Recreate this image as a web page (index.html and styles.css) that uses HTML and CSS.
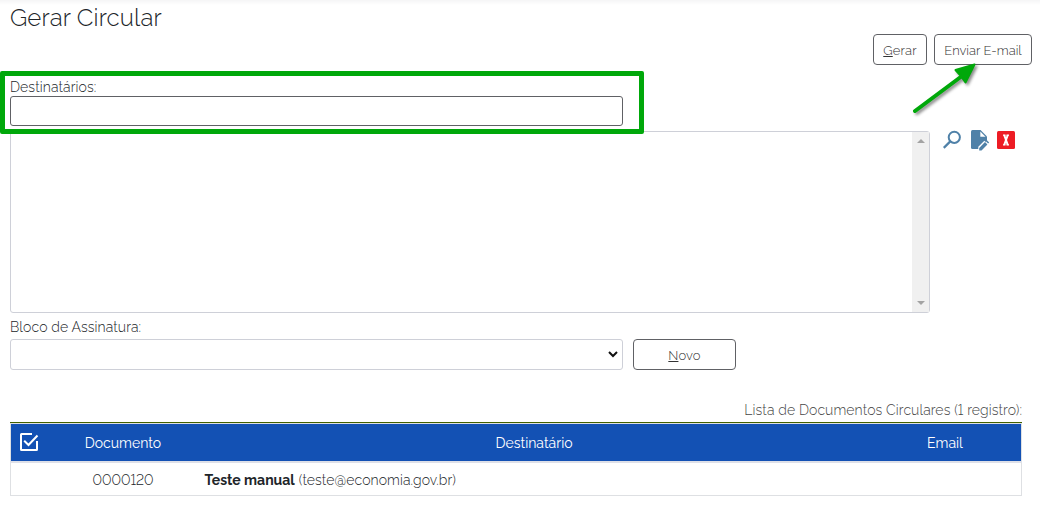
FILE: index.html
```html
<!DOCTYPE html>
<html lang="pt-BR">
<head>
<meta charset="utf-8">
<title>Gerar Circular</title>
<link rel="stylesheet" href="styles.css">
</head>
<body>
<main class="page">
  <h1 class="title"><span>Gerar Circular</span></h1>
  <div class="commands">
    <button class="btn btn-gerar"><span><u>G</u>erar</span></button>
    <button class="btn btn-enviar"><span>Enviar E-mail</span></button>
  </div>
  <section class="recipients">
    <label class="label label-dest" for="dest"><span>Destinatários:</span></label>
    <input class="field" id="dest" type="text">
    <div class="list-row">
      <div class="listbox">
        <div class="scrollbar"><i class="up"></i><i class="down"></i></div>
      </div>
      <div class="tools">
        <svg width="20" height="20" viewBox="0 0 20 20"><circle cx="11.3" cy="6.3" r="5.6" fill="none" stroke="#4f81a8" stroke-width="2"/><path d="M7.3 10.4L0.8 16.9" stroke="#4f81a8" stroke-width="2.2"/></svg>
        <svg width="20" height="20" viewBox="0 0 20 20"><path d="M2.5 -1H10.5L17 5.500V9.600L8.500 18H2.500Q1 18 1 16.500V0.500Q1 -1 2.500 -1Z" fill="#4f81a8"/><path d="M10.300 0.600V5.800H15.500Z" fill="#fff"/><path d="M8.300 20V15.800L14.300 9.800L18.900 14L13 20Z" fill="#fff"/><path d="M9.200 19.600V16.900L15 11.100L17.400 13.500L11.500 19.600Z" fill="#4f81a8"/><path d="M15.800 10.300L16.900 9.200L19.200 11.500L18.100 12.600Z" fill="#4f81a8"/></svg>
        <svg width="18" height="18" viewBox="0 0 18 18"><rect width="18" height="18" rx="1.5" fill="#ed1c24"/><path d="M7.200 4L10.800 14M10.800 4L7.200 14" stroke="#fff" stroke-width="2"/><path d="M6 4.200H8.500M9.500 4.200H12M6 13.800H8.500M9.500 13.800H12" stroke="#fff" stroke-width="1.200"/></svg>
      </div>
    </div>
  </section>
  <section class="block">
    <span class="label label-bloco"><span>Bloco de Assinatura:</span></span>
    <div class="block-row">
      <div class="select"><svg width="10" height="7" viewBox="0 0 10 7"><path d="M1 1L5 5L9 1" fill="none" stroke="#111" stroke-width="2"/></svg></div>
      <button class="btn btn-novo"><span><u>N</u>ovo</span></button>
    </div>
  </section>
  <section class="documents">
    <div class="caption"><span>Lista de Documentos Circulares (1 registro):</span></div>
    <div class="table">
      <div class="row head">
        <div class="check"><svg width="20" height="20" viewBox="0 0 20 20"><path d="M13 2H2.500Q2 2 2 2.500V17.500Q2 18 2.500 18H17.500Q18 18 18 17.500V9" fill="none" stroke="#fff" stroke-width="2"/><path d="M5.200 8.800L9.500 13L18.500 3.500" fill="none" stroke="#fff" stroke-width="2"/></svg></div>
        <div class="doc"><span>Documento</span></div>
        <div class="person centered"><span>Destinatário</span></div>
        <div class="mail"><span>Email</span></div>
      </div>
      <div class="row item">
        <div class="check"></div>
        <div class="doc"><span class="number">0000120</span></div>
        <div class="person"><b>Teste manual</b><span class="address">(teste@economia.gov.br)</span></div>
        <div class="mail"></div>
      </div>
    </div>
  </section>
  <div class="highlight"></div>
  <svg class="arrow" width="80" height="64" viewBox="0 0 80 64"><g fill="#00a80a" stroke="#00a80a"><path d="M10 54L57 19" stroke-width="4" stroke-linecap="round"/><path d="M69.500 7.500L50.500 13L55.500 18.500L60.500 25.500Z" stroke-width="2" stroke-linejoin="round"/></g></svg>
</main>
</body>
</html>
```
FILE: styles.css
```css
* { box-sizing: border-box; }
body {
  margin: 0;
  background: #fff;
  color: #212529;
  font: 300 14px/20px Raleway, Lato, sans-serif;
  font-variant-numeric: lining-nums;
}
.page {
  position: relative;
  height: 509px;
  overflow: hidden;
  padding: 0 8px 0 10px;
  background: linear-gradient(#f5f5f6, #fff) 0 0 / 100% 5px no-repeat;
}
.title {
  margin: 0;
  height: 34px;
  padding-top: 3px;
  font-size: 24px;
  line-height: 30px;
  font-weight: 300;
}
.title span { letter-spacing: 0.15px; }
.commands { display: flex; justify-content: flex-end; gap: 7px; }
.btn {
  height: 31px;
  padding: 0;
  border: 1px solid #606165;
  border-radius: 4px;
  background: #fff;
  color: #333;
  font: 300 13px/20px Raleway, Lato, sans-serif;
  white-space: nowrap;
}
.btn u { text-underline-offset: 1px; }
.btn-gerar { width: 54px; }
.btn-enviar { width: 98px; }
.btn-novo { width: 103px; }
.btn span { position: relative; top: 1px; letter-spacing: 0.15px; }
.btn-enviar span { letter-spacing: 0; }
.recipients { padding-top: 12px; }
.label { display: block; height: 19px; letter-spacing: 0.1px; }
.field {
  display: block;
  width: 613px;
  height: 30px;
  border: 1px solid #606165;
  border-radius: 3px;
  background: #fff;
}
.list-row { display: flex; margin-top: 5px; gap: 13px; }
.listbox {
  display: flex;
  justify-content: flex-end;
  width: 920px;
  height: 182px;
  border: 1px solid #ced0d8;
  border-radius: 3px;
}
.scrollbar {
  display: flex;
  flex-direction: column;
  justify-content: space-between;
  align-items: center;
  width: 17px;
  padding: 7px 0;
  background: #f0f0f0;
}
.scrollbar i { border: 4px solid transparent; }
.scrollbar .up { border-top: 0; border-bottom-color: #a3a3a3; }
.scrollbar .down { border-bottom: 0; border-top-color: #a3a3a3; }
.tools { display: flex; gap: 7px; }
.tools svg { overflow: visible; }
.block { padding-top: 4px; }
.block .label { height: 22px; }
.block-row { display: flex; gap: 10px; }
.select {
  display: flex;
  align-items: center;
  justify-content: flex-end;
  width: 613px;
  height: 31px;
  padding-right: 4px;
  border: 1px solid #ced0d8;
  border-radius: 3px;
}
.documents { width: 1012px; padding-top: 30px; }
.caption {
  height: 22px;
  text-align: right;
  color: #444;
  white-space: nowrap;
  letter-spacing: 0.1px;
}
.table { border: 1px solid #dee0e3; border-top: 0; }
.row { display: flex; align-items: center; }
.head {
  height: 41px;
  margin: 0 -1px;
  padding: 0 1px;
  border-top: 1px solid #426100;
  border-bottom: 2px solid #dee0e8;
  background: #1351b4;
  background-clip: padding-box;
  box-shadow: inset 0 1px #dee0e3, inset 1px 0 #dee0e3, inset -1px 0 #dee0e3;
  color: #fff;
  font-weight: 400;
}
.head > div:not(.check) { padding-top: 2px; }
.item { height: 32px; padding-top: 2px; }
.check { display: flex; width: 52px; padding-left: 8px; }
.doc { width: 120px; text-align: center; }
.person { width: 702px; padding-left: 21.5px; white-space: nowrap; }
.person.centered { padding-left: 0; text-align: center; }
.mail { width: 136px; padding-right: 16px; text-align: center; }
.person b { margin-right: 4px; font-weight: 700; }
.address { letter-spacing: 0.08px; }
.highlight {
  position: absolute;
  left: 0;
  top: 71px;
  width: 644px;
  height: 63px;
  border: 5px solid #00a80a;
  border-radius: 2px;
}
.arrow {
  position: absolute;
  left: 905px;
  top: 57px;
  filter: drop-shadow(2px 2px 1.5px rgba(0, 0, 0, 0.45));
}
```
